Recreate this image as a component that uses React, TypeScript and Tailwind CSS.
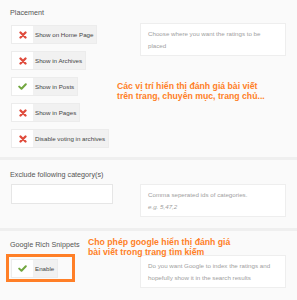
import React from "react";

type Opt = { label: string; on: boolean };

const PLACEMENT: Opt[] = [
  { label: "Show on Home Page", on: false },
  { label: "Show in Archives", on: false },
  { label: "Show in Posts", on: true },
  { label: "Show in Pages", on: false },
  { label: "Disable voting in archives", on: false },
];

function Cross() {
  return (
    <svg width="8" height="8" viewBox="0 0 8 8">
      <path d="M1.5 1.5L6.5 6.5M6.5 1.5L1.5 6.5" stroke="#df4a3b" strokeWidth={2.3} strokeLinecap="round" />
    </svg>
  );
}

function Check() {
  return (
    <svg width="9" height="7" viewBox="0 0 9 7">
      <path d="M1.2 3.6L3.5 5.8L7.8 1.3" fill="none" stroke="#72a740" strokeWidth={2} strokeLinecap="round" strokeLinejoin="round" />
    </svg>
  );
}

function Toggle({ label, on }: Opt) {
  return (
    <div className="flex h-[19px] w-fit border border-[#ececec]">
      <div className="flex w-[21px] items-center justify-center bg-white">{on ? <Check /> : <Cross />}</div>
      <div className="flex items-center bg-[#f1f1f1] pl-[2px] pr-[3px] text-[6.2px] text-[#444]">{label}</div>
    </div>
  );
}

function Desc({ children }: { children: React.ReactNode }) {
  return (
    <div className="w-[146px] border border-[#eeeeee] bg-white py-[4px] pl-[7px] text-[6.2px] leading-[11.5px] text-[#a0a0a0]">
      {children}
    </div>
  );
}

function Heading({ children }: { children: React.ReactNode }) {
  return <div className="text-[7.2px] leading-[10px] text-[#555]">{children}</div>;
}

export default function App() {
  return (
    <div className="relative h-[300px] w-[297px] overflow-hidden bg-[#fafafa] font-['Liberation_Sans',Arial,sans-serif]">
      {/* Placement */}
      <div className="h-[157px] pl-[10px] pt-[8px]">
        <Heading>Placement</Heading>
        <div className="mt-[5px] flex items-start">
          <div className="flex w-[130px] flex-col gap-[7px] pl-[1px] pt-[2px]">
            {PLACEMENT.map((o) => (
              <Toggle key={o.label} {...o} />
            ))}
          </div>
          <Desc>
            <div>Choose where you want the ratings to be</div>
            <div>placed</div>
          </Desc>
        </div>
      </div>
      <div className="h-[3px] bg-[#efefef]" />

      {/* Exclude */}
      <div className="h-[68px] pl-[10px] pt-[10px]">
        <Heading>Exclude following category(s)</Heading>
        <div className="mt-[4px] flex items-start">
          <div className="w-[130px] pl-[1px]">
            <div className="h-[20px] w-[102px] border border-[#e6e6e6] bg-white" />
          </div>
          <Desc>
            <div>Comma seperated ids of categories.</div>
            <div className="italic">e.g. 5,47,2</div>
          </Desc>
        </div>
      </div>
      <div className="h-[3px] bg-[#efefef]" />

      {/* Rich snippets */}
      <div className="pl-[10px] pt-[9px]">
        <Heading>Google Rich Snippets</Heading>
        <div className="mt-[5px] flex items-start">
          <div className="w-[130px] pl-[1px] pt-[4px]">
            <Toggle label="Enable" on />
          </div>
          <Desc>
            <div>Do you want Google to index the ratings and</div>
            <div>hopefully show it in the search results</div>
          </Desc>
        </div>
      </div>

      {/* annotations */}
      <div className="absolute left-[117px] top-[81px] text-[8.7px] font-bold leading-[10px] text-[#ff7f27]">
        <div>Các vị trí hiển thị đánh giá bài viết</div>
        <div>trên trang, chuyên mục, trang chủ...</div>
      </div>
      <div className="absolute left-[88px] top-[237px] text-[8.7px] font-bold leading-[10px] text-[#ff7f27]">
        <div>Cho phép google hiển thị đánh giá</div>
        <div>bài viết trong trang tìm kiếm</div>
      </div>
      <div className="absolute left-[6px] top-[254px] h-[28px] w-[69px] border-[3px] border-[#ff7f27]" />
    </div>
  );
}
